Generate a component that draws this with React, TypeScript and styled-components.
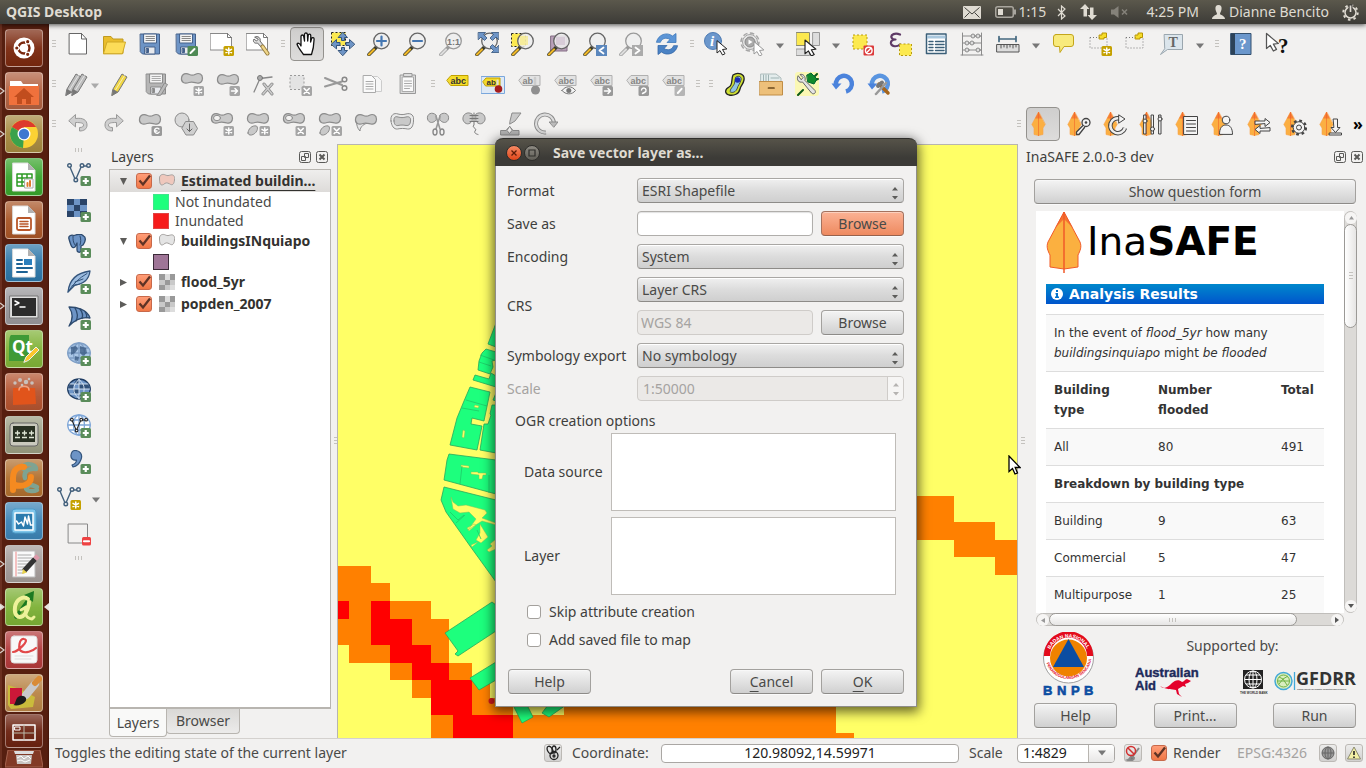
import React from 'react';
import styled, { createGlobalStyle } from 'styled-components';

const ui = '"Noto Sans", "Open Sans", sans-serif';
const line = '#b8b5b0';

const Global = createGlobalStyle`
  * { box-sizing: border-box; }
  body { margin: 0; overflow: hidden; font: 14px/20px ${ui}; color: #4a4a48; background: #f2f1f0; }
  button, input, select, textarea { font: inherit; color: inherit; margin: 0; }
  svg { display: block; flex: none; }
`;

/* ---------- page frame ---------- */
const Desktop = styled.div`
  display: flex; flex-direction: column; height: 100vh; min-height: 768px;
`;
const TopBar = styled.header`
  display: flex; align-items: center; height: 24px; flex: none; padding: 0 7px 0 6px; z-index: 2;
  background: linear-gradient(#5b584c, #3c3b37); color: #dfdbd2; box-shadow: 0 1px 5px rgba(0,0,0,.7);
`;
const AppName = styled.strong` flex: 1; font-weight: 700; font-size: 14px; `;
const Indicator = styled.span<{ $gap: number }>`
  display: flex; align-items: center; gap: 3px; margin-left: ${p => p.$gap}px;
`;
const Below = styled.div` flex: 1; display: flex; min-height: 0; `;
const Main = styled.div` flex: 1; display: flex; flex-direction: column; min-width: 0; `;
const Middle = styled.div` flex: 1; display: flex; min-height: 0; `;

/* ---------- launcher ---------- */
const Launcher = styled.nav`
  width: 49px; flex: none; display: flex; flex-direction: column; gap: 5px; padding-top: 5px; overflow: hidden;
  background: linear-gradient(90deg, #6b3020 0 2px, #561f10 2px 47px, #431408);
`;
const LaunchRow = styled.div<{ $folded?: boolean }>`
  display: grid; grid-template-columns: 5px 38px 6px; align-items: center; flex: none;
  margin-top: ${p => (p.$folded ? -3 : 0)}px;
`;
const Tile = styled.button<{ $bg: string; $short?: boolean }>`
  height: ${p => (p.$short ? 34 : 38)}px; padding: 0; display: grid; place-items: center; border-radius: 4px; overflow: hidden;
  border: 1px solid rgba(255,255,255,.38);
  background: linear-gradient(rgba(255,255,255,.3), rgba(255,255,255,.05) 50%, rgba(0,0,0,.06)), ${p => p.$bg};
`;

/* ---------- toolbars ---------- */
const ToolRow = styled.div` display: flex; gap: 3px; height: 40px; align-items: center; flex: none; `;
const Bar = styled.div<{ $end?: boolean }>`
  display: flex; align-items: center; gap: 2px; margin-left: ${p => (p.$end ? 'auto' : '0')};
`;
const Handle = styled.span`
  width: 10px; height: 9px; flex: none; border: solid #f2f1f0; border-width: 0 3px;
  background: repeating-linear-gradient(#c4c2be 0 1px, transparent 1px 3px);
`;
const SideHandle = styled.span`
  width: 9px; height: 10px; border: solid #f2f1f0; border-width: 3px 0;
  background: repeating-linear-gradient(90deg, #c4c2be 0 1px, transparent 1px 3px);
`;
const ToolButton = styled.button<{ $on?: boolean }>`
  width: 34px; height: 34px; padding: 0; display: grid; place-items: center; border-radius: 4px;
  border: 1px solid ${p => (p.$on ? '#94928e' : 'transparent')};
  background: ${p => (p.$on ? 'linear-gradient(#cfcecd, #dddcdb)' : 'none')};
`;
const Arrow = styled.button<{ $w: number }>`
  width: ${p => p.$w}px; height: 34px; padding: 4px 0 0; border: 0; background: none; display: grid; place-items: center;
`;
const Split = styled.div` display: flex; width: 40px; padding-left: 4px; `;
const Bare = styled.button` border: 0; background: none; padding: 0; height: 34px; display: grid; place-items: center; `;
const More = styled.button` width: 16px; padding: 0; border: 0; background: none; color: #000; font: 700 16px/20px ${ui}; `;
const SideTools = styled.div`
  width: 60px; flex: none; display: flex; flex-direction: column; align-items: center; gap: 2px; padding-top: 1px;
`;
const SideSplit = styled.div` display: flex; width: 60px; padding-left: 3px; `;

/* ---------- docks ---------- */
const DockHead = styled.div`
  display: flex; align-items: center; gap: 4px; height: 25px; flex: none; color: #3f3f3d;
  span { flex: 1; }
`;
const DockBtn = styled.button` border: 0; background: none; padding: 0; width: 13px; height: 13px; `;
const LayersDock = styled.section` width: 222px; flex: none; display: flex; flex-direction: column; `;
const LayersHead = styled(DockHead)` padding: 0 2px; `;
const Tree = styled.ul`
  flex: 1; margin: 0; padding: 0; list-style: none; background: #fff; border: 1px solid ${line}; border-bottom-width: 2px;
`;
const LayerRow = styled.li<{ $sel?: boolean }>`
  display: flex; align-items: center; height: 22px; padding-left: 7px; color: #33322f; font-weight: 700;
  background: ${p => (p.$sel ? 'linear-gradient(#efeeed, #dddbd9)' : 'none')};
  > svg { margin: 0 6px 0 7px; }
  > span:last-child { text-decoration: ${p => (p.$sel ? 'underline' : 'none')}; text-underline-offset: 4px; white-space: nowrap; }
`;
const Expander = styled.button` width: 12px; height: 16px; margin-right: 7px; padding: 0; border: 0; background: none; display: grid; place-items: center; `;
const ClassRow = styled.li` display: flex; align-items: center; gap: 6px; height: 19px; padding-left: 43px; `;
const Swatch = styled.i<{ $c: string; $b: string }>` width: 16px; height: 16px; background: ${p => p.$c}; border: 1px solid ${p => p.$b}; `;
const Tabs = styled.div` display: flex; height: 29px; flex: none; align-items: flex-start; `;
const Tab = styled.button<{ $on?: boolean }>`
  height: ${p => (p.$on ? 28 : 25)}px; width: ${p => (p.$on ? 58 : 74)}px; padding: 0;
  border: 1px solid ${line}; border-top: 0; border-radius: 0 0 4px 4px; margin-left: ${p => (p.$on ? 0 : -1)}px;
  background: ${p => (p.$on ? '#f9f9f8' : 'linear-gradient(#d9d8d6, #ecebea)')};
`;
const Splitter = styled.div<{ $w: number }>` width: ${p => p.$w}px; flex: none; display: grid; place-items: center; `;
const MapView = styled.main` flex: 1; min-width: 0; border: 1px solid ${line}; border-bottom: 0; background: #ffff66; overflow: hidden; `;

/* ---------- shared controls ---------- */
const Push = styled.button<{ $hot?: boolean; $wide?: boolean }>`
  width: ${p => (p.$wide ? '100%' : '83px')}; height: 25px; flex: none; padding: 0; border-radius: 4px; color: #4a4a48;
  border: 1px solid ${p => (p.$hot ? '#a5725e' : '#a3a19e')}; border-bottom-color: ${p => (p.$hot ? '#96624d' : '#8d8b88')};
  background: ${p => (p.$hot ? 'linear-gradient(#fbb294, #ee8a60)' : 'linear-gradient(#f4f4f4, #e2e2e2 50%, #d0d0d0)')};
  box-shadow: inset 0 1px rgba(255,255,255,.4), 0 1px #fafafa;
  u { text-underline-offset: 4px; }
`;
const SelectWrap = styled.span`
  display: grid; align-items: center; height: 25px; min-width: 0;
  > * { grid-area: 1 / 1; }
  > svg { justify-self: end; margin: 4px 4px 0 0; pointer-events: none; }
`;
const Select = styled.select`
  appearance: none; width: 100%; height: 25px; padding: 0 4px; border-radius: 4px; color: #4a4a48;
  border: 1px solid #a9a7a4; border-bottom-color: #8d8b88; background: linear-gradient(#f0f0f0, #dcdcdc 50%, #cfcfcf);
  box-shadow: inset 0 1px #fff;
`;
const Field = styled.input`
  flex: 1; min-width: 0; height: 25px; padding: 0 3px; border: 1px solid #b0aeab; border-radius: 4px; background: #fff;
  box-shadow: inset 0 1px 1px rgba(0,0,0,.12);
  &:disabled { background: #ebe9e7; color: #a5a3a1; border-color: #cfccc9; box-shadow: none; }
`;
const CheckWrap = styled.span<{ $s: number }>`
  display: inline-grid; width: ${p => p.$s}px; height: ${p => p.$s}px; flex: none;
  > * { grid-area: 1 / 1; }
  > svg { pointer-events: none; }
`;
const Box = styled.input`
  appearance: none; width: 100%; height: 100%; border: 1px solid #a3a09c; border-radius: 3px; background: #fff;
  &:checked { border-color: #c8694a; background: linear-gradient(#ff9d78, #f07746); }
`;

/* ---------- InaSAFE dock ---------- */
const SafeDock = styled.section` width: 340px; flex: none; display: flex; flex-direction: column; `;
const SafeHead = styled(DockHead)` padding-right: 2px; `;
const SafeBody = styled.div` flex: 1; min-height: 0; display: flex; flex-direction: column; padding: 10px 10px 10px 8px; `;
const WebGrid = styled.div`
  flex: 1; min-height: 0; margin: 7px -1px 6px 2px; display: grid; grid-template: minmax(0, 1fr) 13px / 1fr 13px;
`;
const Web = styled.article`
  background: #fff; overflow: hidden; padding: 0 20px 0 10px; font: 12px/20px "DejaVu Sans", sans-serif; color: #333;
`;
const Brand = styled.div` display: flex; height: 73px; color: #000; font: 39px/62px "DejaVu Sans", sans-serif; svg { margin-right: 5px; } `;
const Results = styled.h2`
  display: flex; align-items: center; gap: 6px; margin: 0 0 10px; padding-left: 5px; height: 20px;
  color: #fff; font: 700 14px/20px "DejaVu Sans", sans-serif; background: linear-gradient(#0088cc, #0055cc);
`;
const Table = styled.table`
  width: 100%; border-collapse: separate; border-spacing: 0; table-layout: fixed;
  td, th { padding: 8px; border-top: 1px solid #ddd; text-align: left; vertical-align: top; white-space: nowrap; }
  th { white-space: normal; }
  tr:nth-child(odd) > * { background: #f9f9f9; }
`;
const TypeCol = styled.col` width: 104px; `;
const CountCol = styled.col` width: 123px; `;
const VScroll = styled.div`
  display: flex; flex-direction: column; border: 1px solid #c0bebb; border-radius: 7px; background: #dcdad7;
`;
const HScroll = styled.div` display: flex; border: 1px solid #c0bebb; border-radius: 7px; background: #dcdad7; `;
const ScrollEnd = styled.button`
  width: 12px; height: 12px; flex: none; padding: 0; border: 0; border-radius: 6px; background: #f6f5f4; display: grid; place-items: center;
`;
const Thumb = styled.div<{ $v?: boolean }>`
  ${p => (p.$v ? 'height: 104px; margin: 0 -1px;' : 'width: 248px; margin: -1px 0;')}
  flex: none; border: 1px solid #9b9996; border-radius: 7px; display: grid; place-items: center;
  background: linear-gradient(${p => (p.$v ? '90deg,' : '')} #fff, #e6e5e4);
  span { border-color: transparent; background-clip: padding-box; }
`;
const Gap = styled.span` flex: 1; `;
const Logos = styled.div` display: flex; gap: 11px; height: 65px; flex: none; margin-bottom: 6px; padding-left: 9px; `;
const Support = styled.div` flex: 1; display: flex; flex-direction: column; justify-content: space-between; text-align: center; padding-top: 4px; `;
const LogoRow = styled.div` display: flex; padding-left: 30px; align-items: flex-end; gap: 6px; `;
const Buttons = styled.div` display: flex; justify-content: space-between; `;

/* ---------- status bar ---------- */
const Status = styled.footer`
  height: 30px; flex: none; display: flex; align-items: center; padding: 0 3px 1px 6px; border-top: 1px solid #d4d1ce;
`;
const Message = styled.span` flex: 1; white-space: nowrap; `;
const StatusLabel = styled.label<{ $w: number; $dim?: boolean }>`
  width: ${p => p.$w}px; flex: none; white-space: nowrap; color: ${p => (p.$dim ? '#a5a3a1' : 'inherit')};
`;
const Coord = styled.input`
  width: 298px; height: 19px; margin-right: 10px; padding: 0; text-align: center; color: #222;
  border: 1px solid #aaa7a4; border-radius: 4px; background: #fff;
`;
const Combo = styled.span`
  display: flex; width: 98px; height: 19px; margin-right: 9px; border: 1px solid #aaa7a4; border-radius: 4px; background: #fff; overflow: hidden;
  input { width: 71px; border: 0; border-right: 1px solid ${line}; padding: 0 0 0 5px; color: #222; background: none; }
  button { flex: 1; border: 0; padding: 0; display: grid; place-items: center; background: linear-gradient(#fff, #e8e7e6); }
`;
const MiniBtn = styled.button<{ $gap: number }>`
  width: 18px; height: 18px; flex: none; margin-right: ${p => p.$gap}px; padding: 0; display: grid; place-items: center;
  border: 1px solid #bcb9b5; border-radius: 3px; background: linear-gradient(#ececeb, #d2d1d0);
`;
const RenderBox = styled.label` display: flex; align-items: center; gap: 6px; width: 86px; flex: none; `;

/* ---------- dialog window ---------- */
const Dialog = styled.form`
  position: absolute; left: 495px; top: 138px; width: 422px; z-index: 3; background: #f2f1f0; color: #3f3f3d;
  border: 1px solid #8f8d89; border-top: 0; border-radius: 8px 8px 0 0; box-shadow: 0 3px 12px 2px rgba(0,0,0,.6);
`;
const TitleBar = styled.div`
  display: flex; align-items: center; gap: 2px; height: 28px; margin: 0 -1px; padding-left: 11px; border-radius: 8px 8px 0 0;
  background: linear-gradient(#565349, #3c3b37 70%); color: #dfdbd2; border-top: 1px solid #2f2e2b;
  strong { margin-left: 11px; }
`;
const WinBtn = styled.button<{ $close?: boolean }>`
  width: 16px; height: 16px; padding: 0; border-radius: 8px; border: 1px solid #2f2e2b; display: grid; place-items: center;
  background: ${p => (p.$close ? 'linear-gradient(#f58a64, #e0461a)' : 'linear-gradient(#8d8a82, #605e57)')};
`;
const Form = styled.div`
  display: grid; grid-template-columns: 122px minmax(0, 1fr); column-gap: 8px; row-gap: 8px; padding: 12px 12px 10px 11px; align-items: center;
`;
const Label = styled.label<{ $off?: boolean; $tall?: boolean }>`
  white-space: nowrap; color: ${p => (p.$off ? '#a5a3a1' : 'inherit')}; grid-row: ${p => (p.$tall ? 'span 2' : 'auto')};
`;
const Pair = styled.div` display: flex; gap: 8px; min-width: 0; `;
const Spin = styled.span`
  display: flex; height: 25px; border: 1px solid #cfccc9; border-radius: 4px; background: #ebe9e7; overflow: hidden;
  input { flex: 1; min-width: 0; border: 0; background: none; padding: 0 5px; color: #a5a3a1; }
  span { width: 16px; border-left: 1px solid #cfccc9; background: #f6f5f4; display: grid; place-items: center; }
`;
const Group = styled.fieldset`
  border: 0; margin: 0; padding: 0 20px 0 28px; min-width: 0;
  legend { padding: 0; margin-left: -9px; height: 22px; }
`;
const Options = styled.div` display: grid; grid-template-columns: 81px minmax(0, 1fr); column-gap: 6px; row-gap: 6px; align-items: center; `;
const OptionArea = styled.textarea` width: 100%; height: 78px; display: block; resize: none; border: 1px solid #bfbcb8; background: #fff; `;
const Check = styled.label` display: flex; align-items: center; gap: 8px; height: 28px; padding-left: 31px; `;
const Checks = styled.div` padding: 3px 0 15px; `;
const Actions = styled.div` display: flex; gap: 8px; padding: 0 12px 12px; button:first-child { margin-right: auto; } `;
const Pointer = styled.div` position: absolute; left: 1008px; top: 455px; z-index: 4; `;

/* ---------- icon pieces ---------- */
type Kids = { children?: React.ReactNode };
const I = ({ children, s = 24 }: Kids & { s?: number }) => (
  <svg width={s} height={s} viewBox="0 0 24 24" fill="none" strokeLinecap="round" strokeLinejoin="round">{children}</svg>
);
const G = '#8b8b8b';
const Sheet = ({ c = '#666' }) => <g><path d="M3.500 1.500h12l5 5.500v15h-17z" fill="#fff" stroke={c} /><path d="M15.500 1.500v5.500h5" stroke={c} /></g>;
const Badge = ({ c, children }: Kids & { c: string }) => <g><rect x="13.500" y="14" width="10.500" height="10" rx="1.500" fill={c} />{children}</g>;
const Plus = () => <Badge c="#5a8c5a"><path d="M18.750 16v6M15.750 19h6" stroke="#fff" strokeWidth="2.200" strokeLinecap="butt" /></Badge>;
const Star = ({ c = '#c5a100' }) => <Badge c={c}><path d="M18.750 16v6M16 17.400l5.500 3.200M21.500 17.400L16 20.600" stroke="#fff" strokeWidth="1.500" /></Badge>;
const Cross = () => <Badge c="#a5a5a5"><path d="M16.200 16.500l5 5M21.200 16.500l-5 5" stroke="#fff" strokeWidth="1.700" /></Badge>;
const Blob = ({ fill = '#c9c9c9', stroke = G }) => (
  <path d="M1.500 6C2 1.500 6 .700 9.500 2.500c2.500 1.200 4 .800 6-.300 3.500-1.700 7 0 7 4 0 3.500-2.500 5.500-5.500 4.800-3-.600-5-1.500-8-.500C4.500 12 1 10.500 1.500 6z" fill={fill} stroke={stroke} strokeWidth="1.200" />
);
const Blob2 = () => <path d="M2 21c0-4 4-8 8.500-7 2.500 2 0 8-5 9-2 .300-3.500-.500-3.500-2z" fill="#c9c9c9" stroke={G} />;
const Ring = ({ children }: Kids) => <I><Blob /><ellipse cx="7" cy="6" rx="3.500" ry="2.700" fill="#f2f1f0" stroke={G} />{children}</I>;
const Lens = ({ dim, children, under }: Kids & { dim?: boolean; under?: React.ReactNode }) => (
  <I>
    {under}
    <path d="M2 22.500l7-7" stroke={dim ? '#999' : '#3a3a2a'} strokeWidth="3.600" />
    <path d="M2 22.500l5-5" stroke={dim ? '#ddd' : '#f0b828'} strokeWidth="2.200" />
    <circle cx="14.500" cy="9" r="7.800" fill="#eee" fillOpacity=".85" stroke={dim ? '#9a9a9a' : '#666'} strokeWidth="1.300" />
    {children}
  </I>
);
const Tag = ({ on, t = 'abc', children }: Kids & { on?: boolean; t?: string }) => (
  <I>
    <path d="M2 8L6 3.500h17v10H6z" fill={on ? '#f5dc28' : '#e2e2e2'} stroke={on ? '#c0a000' : '#b0b0b0'} />
    <text x="5.500" y="11.500" fontFamily="Liberation Sans, sans-serif" fontWeight="700" fontSize="9" fill={on ? '#333' : '#858585'}>{t}</text>
    {children}
  </I>
);
const Vee = ({ c = '#43607c' }) => <g stroke={c} strokeWidth="1.400"><path d="M2.500 4l6 14L14.500 4H20" /><g fill="#f2f1f0"><circle cx="2.500" cy="3.500" r="1.800" /><circle cx="8.800" cy="18" r="1.800" /><circle cx="15" cy="3.500" r="1.800" /><circle cx="21.500" cy="3.500" r="1.800" /></g></g>;
const Globe = ({ fill, c }: { fill: string; c: string }) => <g stroke={c} strokeWidth="1.300"><ellipse cx="12" cy="11" rx="11.300" ry="10" fill={fill} /><ellipse cx="12" cy="11" rx="5.500" ry="10" /><path d="M12 1v20M1 11h22M3 6h18M3 16h18" /></g>;
const Floppy = ({ dim }: { dim?: boolean }) => <g stroke={dim ? G : '#44608a'}><path d="M2.500 2h19v20h-17l-2-2z" fill={dim ? '#b5b5b5' : '#6d94c6'} /><path d="M6 2h12.500v9H6z" fill="#f4f4f4" /><path d="M8 4.500h8.500M8 6.500h8.500M8 8.500h8.500" stroke={dim ? '#aaa' : '#888'} /><path d="M7 15h10v7H7z" fill="#e8eaee" /><path d="M8.500 16.500h2v4h-2z" fill={dim ? '#888' : '#44608a'} /></g>;
const Pencil = ({ c, x = 0 }: { c: string; x?: number }) => <g transform={`translate(${x} 0)`}><path d="M5 17L14 2l5 3-9 15-6 3.500z" fill={c} stroke="#777" /><path d="M7.500 18L16.500 3.500" stroke="#fff" strokeOpacity=".6" /><path d="M5 17l5 3-6 3.500z" fill="#777" /></g>;
const Mouse = ({ x = 12, y = 10, c = '#222', k = 1 }) => <path transform={`translate(${x} ${y}) scale(${k})`} d="M0 0v12l3-2.500 2.500 4.500 2.500-1.300-2.500-4.200 4-.500z" fill="#fff" stroke={c} />;
const Leaf = ({ children }: Kids) => (
  <I><path d="M7.500 0L.800 12.500 3 16v6.500l4.500 1 4.500-1V16l2.200-3.500z" fill="#fbaf42" stroke="#f9a24a" strokeWidth=".6" /><path d="M7.500 0v24" stroke="#f58233" strokeWidth="1" /><path d="M4 6.500L7.500 0 11 6.500z" fill="#f1592a" opacity=".55" />{children}</I>
);
const Tri = ({ c = '#777' }) => <svg width="8" height="6" viewBox="0 0 8 6"><path d="M0 .5h8L4 5.500z" fill={c} /></svg>;
const UpDown = ({ c = '#5c5c5a' }) => <svg width="10" height="14" viewBox="0 0 10 14"><path d="M2 4.500h6L5 1zM2 10h6l-3 3.500z" fill={c} /></svg>;
const Note = () => <path d="M11.500 3h2.500V1h4.500v4.500H16V7h-4.500z" fill="#f5dc28" stroke="#b89400" />;

/* ---------- toolbar data ---------- */
type Tool = [string, React.ReactNode, ('on' | 'menu')?];
const fileTools: Tool[] = [
  ['New', <I><Sheet /></I>],
  ['Open', <I><path d="M1.500 21V4.500H9L11 7h10v14z" fill="#e9bd2c" stroke="#c09a20" /><path d="M1.500 21.500L5 10h18.500l-3 11.500z" fill="#fcdc58" stroke="#cfa827" /></I>],
  ['Save', <I><Floppy /></I>],
  ['Save as', <I><Floppy /><Badge c="#4f8a55"><path d="M16.500 21l4-4" stroke="#fff" strokeWidth="2" /></Badge></I>],
  ['New composer', <I><path d="M.500 1.500h17l4 4v12.500H.500z" fill="#fff" stroke="#888" /><path d="M17.500 1.500v4h4" stroke="#777" /><Star /></I>],
  ['Composer manager', <I><path d="M.500 1.500h17l4 4v12.500H.500z" fill="#fff" stroke="#888" /><path d="M17.500 1.500v4h4" stroke="#777" /><path d="M9 5c3-1.500 6 1 5 4l4 5-2 2-4.500-5C8 12 6.500 9 8 7l2.500 2 1.500-1.500z" fill="#ddd" stroke="#666" /><path d="M16.500 14.500l5 7" stroke="#93793a" strokeWidth="4" /><path d="M16.500 14.500l5 7" stroke="#f0d68a" strokeWidth="2.200" /></I>],
];
const navTools: Tool[] = [
  ['Pan', <I><path d="M8.500 22.500C6 19 3 15.500 2 12c1-1.500 3-.500 4 2V4.500c0-2 2.500-2 2.700 0L9.500 9V2.500c0-2 2.800-2 2.900 0L12.700 9l.500-5.500c.200-1.800 2.600-1.700 2.600.200L15.600 10l1-3.500c.600-1.600 2.700-1 2.500.700-.200 6-.900 10.500-2.600 15.300z" fill="#fff" stroke="#111" strokeWidth="1.300" /></I>, 'on'],
  ['Pan to selection', <I><path d="M.500.500h14v13H.500z" fill="#fce94f" stroke="#222" strokeDasharray="2 2" strokeLinecap="butt" /><path d="M12 .500l4.500 5h-3v3h-3v-3h-3zM12 23.500l4.500-5h-3v-3h-3v3h-3zM.500 12l5-4.500v3h3.500v3H5.500v3zM23.500 12l-5-4.500v3H15v3h3.500v3z" fill="#6d94c6" stroke="#33547c" /></I>],
  ['Zoom in', <Lens><path d="M14.500 4.500v9M10 9h9" stroke="#4577b2" strokeWidth="2.200" /></Lens>],
  ['Zoom out', <Lens><path d="M10 9h9" stroke="#4577b2" strokeWidth="2.200" /></Lens>],
  ['Zoom native', <Lens dim><text x="8" y="12.500" fontFamily="Liberation Sans, sans-serif" fontWeight="700" fontSize="9" fill="#777">1:1</text></Lens>],
  ['Zoom full', <Lens><path d="M3.500.500h7l-2 2 3.500 3.500-2.500 2.500L6 5 3.500 7.500zM23.500.500h-7l2 2-3.500 3.500 2.500 2.500L21 5l2.500 2.500zM23.500 20.500h-7l2-2-3.500-3.500 2.500-2.500L21 16l2.500-2.500z" fill="#6d94c6" stroke="#33547c" strokeWidth=".8" /></Lens>],
  ['Zoom to selection', <Lens under={<path d="M.500 1.500h14v13H.500z" fill="#fce94f" stroke="#222" strokeDasharray="2 2" strokeLinecap="butt" />}><path d="M9 4h8v9H9z" fill="#fce94f" opacity=".45" /></Lens>],
  ['Zoom to layer', <Lens under={<path d="M4 4h16v15H4z" fill="#b9a0b9" stroke="#836c83" />}><path d="M9 5h9v8H9z" fill="#c9b6c9" opacity=".5" /></Lens>],
  ['Zoom last', <Lens><rect x="13" y="13" width="11" height="11" fill="#5b87bd" /><path d="M20.500 15.500l-4 3 4 3" stroke="#fff" strokeWidth="1.800" /></Lens>],
  ['Zoom next', <Lens dim><rect x="13" y="13" width="11" height="11" fill="#ababab" /><path d="M16.500 15.500l4 3-4 3" stroke="#fff" strokeWidth="1.800" /></Lens>],
  ['Refresh', <I><path d="M1.500 10C3 2.500 12-.500 17.500 4L21 1.500v9h-9l3-3C11 5 6.500 6.500 5.500 10z" fill="#5c95d6" stroke="#3e78bb" strokeWidth=".8" /><path d="M22.500 14C21 21.500 12 24.500 6.500 20L3 22.500v-9h9l-3 3c4 2.500 8.500 1 9.500-2.500z" fill="#4a82c4" stroke="#3568a8" strokeWidth=".8" /></I>],
];
const attrTools: Tool[] = [
  ['Identify', <I><circle cx="9" cy="9" r="8.500" fill="#6b97cc" stroke="#4f7cb3" /><text x="6" y="14" fontFamily="Liberation Serif, serif" fontStyle="italic" fontWeight="700" fontSize="15" fill="#fff">i</text><Mouse x={13} y={9} /></I>],
  ['Run action', <I><g strokeLinecap="butt"><circle cx="10" cy="10" r="9" stroke="#a5a5a5" strokeWidth="1.500" strokeDasharray="4.500 2.500" /><circle cx="10" cy="10" r="7.500" fill="#e5e5e5" stroke="#a5a5a5" /></g><circle cx="10" cy="10" r="5" fill="#aaa" stroke="#888" /><path d="M8.500 7.500v5l4-2.500z" fill="#fff" /><Mouse x={14} y={10} c="#999" /></I>, 'menu'],
  ['Select', <I><path d="M.500.500h13v13H.500z" fill="#fce94f" stroke="#8a8a70" /><path d="M17 .500h6.500v13H17zM.500 17h13v6.500H.500z" fill="#ddd" stroke="#999" /><Mouse x={9} y={8} k={1.15} /></I>, 'menu'],
  ['Deselect', <I><path d="M1 3h14v14H1z" fill="#fce94f" stroke="#b99c10" strokeDasharray="2 2" strokeLinecap="butt" /><rect x="11.500" y="13.500" width="10.500" height="10" rx="1" fill="#dc3a3a" /><circle cx="16.750" cy="18.500" r="3.300" stroke="#fff" strokeWidth="1.400" /><path d="M14.500 20.700l4.500-4.400" stroke="#fff" strokeWidth="1.400" /></I>],
  ['Select by expression', <I><path d="M12 2.500C7 .500 2.500 2.500 3.500 5.500c.500 1.500 2 2 4 2-3 .200-5 1.500-4.500 4 .800 3.500 6 3.500 9 1" stroke="#5e3a66" strokeWidth="2.200" /><path d="M11.500 12h12v11.500h-12z" fill="#fce94f" stroke="#b99c10" strokeDasharray="2 2" strokeLinecap="butt" /></I>],
  ['Attribute table', <I><path d="M2.500 2h19.500v19.500H2.500z" fill="#fff" stroke="#3b5f78" strokeWidth="1.500" /><path d="M3 3.500h18.500v3H3z" fill="#a9c7dd" /><path d="M5 9.500h4M5 12.500h4M5 15.500h4M5 18.500h4M11.500 9.500H20M11.500 12.500H20M11.500 15.500H20M11.500 18.500H20" stroke="#3b5f78" strokeWidth="1.400" /></I>],
  ['Field calculator', <I><path d="M2.500 1v22M21.500 1v22M1 23h22M2.500 4h19M2.500 11h19M2.500 18h19" stroke="#8c8c8c" /><g fill="#ddd" stroke="#8c8c8c"><circle cx="13" cy="4" r="2" /><circle cx="18" cy="4" r="2" /><circle cx="7" cy="11" r="2" /><circle cx="12" cy="11" r="2" /><circle cx="7" cy="18" r="2" /><circle cx="18" cy="18" r="2" /></g></I>],
  ['Measure', <I><path d="M3 7h17M3 4.500v5M20 4.500v5" stroke="#44687f" strokeWidth="1.700" /><path d="M1 12.500h22v7.500H1z" fill="#ddd" stroke="#555" /><path d="M5 13v3M8 13v2M11 13v3M14 13v2M17 13v3M20 13v2" stroke="#555" /></I>, 'menu'],
  ['Map tips', <I><path d="M4 2.500h15q2.500 0 2.500 2.500v7q0 2.500-2.500 2.500h-7L8 20.500l-.500-6H4Q1.500 14.500 1.500 12V5Q1.500 2.500 4 2.500z" fill="#f8ea7c" stroke="#c3a51a" /></I>],
  ['New bookmark', <I><path d="M2 5.500h17v10.500H2z" stroke="#777" strokeDasharray="1 2" strokeLinecap="butt" /><Note /><Star /></I>],
  ['Show bookmarks', <I><path d="M2 5.500h17v10.500H2z" stroke="#777" strokeDasharray="1 2" strokeLinecap="butt" /><Note /></I>],
  ['Text annotation', <I><path d="M4.500 2.500h18v15H7.500L.500 22.500l4-5.500z" fill="#dbe5ec" stroke="#9aa6ae" /><text x="8.500" y="14.500" fontFamily="Liberation Serif, serif" fontWeight="700" fontSize="14" fill="#666">T</text></I>, 'menu'],
];
const helpTools: Tool[] = [
  ['Help contents', <I><path d="M2 1.500h20v21H2z" fill="#6b97cc" stroke="#34516f" /><path d="M2 1.500h4v21H2z" fill="#2c4258" /><text x="10" y="17" fontFamily="Liberation Serif, serif" fontWeight="700" fontSize="15" fill="#fff">?</text></I>],
  ["What's this", <I><Mouse x={1.500} y={1.500} c="#555" k={1.250} /><text x="13" y="21" fontFamily="Liberation Serif, serif" fontWeight="700" fontSize="21" fill="#111">?</text></I>],
];
const editTools: Tool[] = [
  ['Toggle editing', <I><Pencil c="#f0d644" /></I>],
  ['Save edits', <I><Floppy dim /><path d="M14 22l6.500-11 3 1.500L17 23l-4 1z" fill="#bbb" stroke={G} /></I>],
  ['Add feature', <I><Blob /><Star c="#a5a5a5" /></I>],
  ['Move feature', <I><g transform="translate(0 1)"><Blob /></g><Badge c="#a5a5a5"><path d="M15.500 19h6M19 16.500l2.500 2.500-2.500 2.500" stroke="#fff" strokeWidth="1.500" /></Badge></I>],
  ['Node tool', <I><path d="M2 20L8 6.500 20 5" stroke="#888" strokeWidth="1.300" /><circle cx="8" cy="6" r="2.500" fill="#aaa" stroke="#777" /><path d="M12 12l8 10M20 12L11 22" stroke="#888" strokeWidth="3" /><path d="M12 12l8 10M20 12L11 22" stroke="#ccc" strokeWidth="1.500" /></I>],
  ['Delete selected', <I><path d="M2 3.500h14v14H2z" fill="#e3e3e3" stroke="#999" strokeDasharray="2 2" strokeLinecap="butt" /><Cross /></I>],
  ['Cut', <I><path d="M1 6l17 7M1 14.500l17-5" stroke="#999" strokeWidth="2" /><circle cx="20.500" cy="7.500" r="2.300" stroke="#888" strokeWidth="1.500" /><circle cx="20.500" cy="16" r="2.300" stroke="#888" strokeWidth="1.500" /></I>],
  ['Copy', <I><path d="M9.500 4.500h8l4 4v11h-12z" fill="#f6f6f6" stroke="#ccc" /><path d="M3.500 3.500h8l4 4v13h-12z" fill="#fafafa" stroke="#aaa" /><path d="M6 9.500h7M6 12h7M6 14.500h7M6 17h7" stroke="#aaa" /></I>],
  ['Paste', <I><path d="M4.500 3h15v18.500h-15z" fill="#ddd" stroke="#999" /><path d="M6.500 5h11v14.500h-11z" fill="#fafafa" stroke="#aaa" /><path d="M8 1.500h8v3H8z" fill="#ddd" stroke="#999" /><path d="M8.500 9h7M8.500 11.500h7M8.500 14h7M8.500 16.500h5" stroke="#aaa" /></I>],
];
const labelTools: Tool[] = [
  ['Labeling', <Tag on />],
  ['Pin labels', <I><path d="M.500 4.500h23v17H.500z" fill="#dfe9f5" stroke="#7aa7dc" /><path d="M2 9.500L5 6h14v8H5z" fill="#f5dc28" stroke="#c0a000" /><text x="5.500" y="12.500" fontFamily="Liberation Sans, sans-serif" fontWeight="700" fontSize="8" fill="#333">ab</text><path d="M16.500 8.500v7" stroke="#ddd" strokeWidth="2" /><circle cx="17.500" cy="17" r="3.800" fill="#a51d1d" /></I>],
  ['Highlight pinned', <Tag t="ab"><path d="M18 6v8" stroke="#ccc" strokeWidth="2.500" /><circle cx="18.500" cy="18" r="4.500" fill="#8f8f8f" /></Tag>],
  ['Show labels', <Tag><path d="M9 18.500c3.500-5 10-5 13.500 0-3.500 4.500-10 4.500-13.500 0z" fill="#f4f4f4" stroke="#777" /><circle cx="15.800" cy="18.500" r="2.500" fill="#777" /></Tag>],
  ['Move label', <Tag><Badge c="#999"><path d="M15.500 19h6M19 16.500l2.500 2.500-2.500 2.500" stroke="#fff" strokeWidth="1.500" /></Badge></Tag>],
  ['Rotate label', <Tag><Badge c="#999"><path d="M16.500 18a2.300 2.300 0 1 1 3 2.500l-2 1" stroke="#fff" strokeWidth="1.400" /></Badge></Tag>],
  ['Change label', <Tag><Badge c="#b5b5b5"><path d="M16.800 21l3.800-4.200" stroke="#fff" strokeWidth="2" /></Badge></Tag>],
];
const pluginTools: Tool[] = [
  ['Contour', <I><path d="M10 3C15-.500 22 2 21 8c-1 5-3 5-4 9-1 5-6 7-11 6-5-1.500-4-6 0-8 4-1.500 2-8 4-12z" fill="#cfe032" stroke="#222" strokeWidth="1.300" /><path d="M13 5c3-2 6 0 5 3-1 4-3 5-4 9-2 4-6 4-7 2.500C7 16 12 14 12 9z" fill="#8fc4e4" stroke="#333" strokeWidth=".8" /><circle cx="14.500" cy="8" r="2.800" fill="#1c2bb0" /></I>],
  ['Archive', <I><path d="M2 2h15l5 4v7H2z" fill="#e3ecec" stroke="#aebcbc" /><path d="M4.500 3v7M7 3v7M9.500 3v7M12 6h8" stroke="#9fb3b3" /><path d="M.500 9.500h23v13.500H.500z" fill="#edc07a" stroke="#c08d45" /><path d="M9.500 16h5.500" stroke="#6b4a1c" strokeWidth="1.700" /></I>],
  ['Plugins', <I><rect width="24" height="24" rx="3" fill="#fbf8b4" /><path d="M3 23l5-5M19 5l3-3M20 8l3-1" stroke="#0c5a18" strokeWidth="2" /><path d="M12 3l4-2 6 6-3 5-6-2z" fill="#108a2a" stroke="#063" /><path d="M3 4C1 8 4 11 7.500 10l9 11c2 2 5 0 3.500-2.500L10 8.500C11 4.500 8 1.500 5 2.500L8 5.500 6.500 7.500z" fill="#e3e3e3" stroke="#666" /></I>],
  ['Reload', <I><path d="M5 13a8 8 0 1 1 10 6.500" stroke="#4b83dc" strokeWidth="4.500" strokeLinecap="butt" /><path d="M.500 11.500h10L5 17.500z" fill="#4b83dc" /></I>],
  ['Configure reload', <I><path d="M5 13a8 8 0 1 1 10 6.500" stroke="#5a95e0" strokeWidth="4.500" strokeLinecap="butt" /><path d="M.500 11.500h10L5 17.500z" fill="#4b83dc" /><path d="M12 12l9 9" stroke="#a5651c" strokeWidth="3.500" /><path d="M19 11L9 22" stroke="#999" strokeWidth="2.500" /><path d="M11 14l4-3.500" stroke="#777" strokeWidth="4" /></I>],
];
const advTools: Tool[] = [
  ['Undo', <I><path d="M3 8.500l6.500-6v4C17 5.500 21 8 21 13c0 4-3 6-7.500 6v-3.500c3 0 4-1 4-2.500 0-2-2.500-2.500-8-2.500v4z" fill="#cfcfcf" stroke="#999" /></I>],
  ['Redo', <I><path d="M21 8.500l-6.500-6v4C7 5.500 3 8 3 13c0 4 3 6 7.500 6v-3.500c-3 0-4-1-4-2.500 0-2 2.500-2.500 8-2.500v4z" fill="#cfcfcf" stroke="#999" /></I>],
  ['Rotate feature', <I><g transform="translate(0 1)"><Blob /></g><Badge c="#999"><path d="M21 17a2.600 2.600 0 1 0 .3 3M17 19h2" stroke="#fff" strokeWidth="1.300" /></Badge></I>],
  ['Simplify', <I><circle cx="8" cy="8" r="7" fill="#d8d8d8" stroke={G} /><path d="M12 9.500h7.500l4 7-4 6.500H12l-4-6.500z" fill="#cfcfcf" stroke={G} /><path d="M15.500 12v7M13 17l2.500 2.500L18 17" stroke="#666" /></I>],
  ['Add ring', <Ring><Star c="#a5a5a5" /></Ring>],
  ['Add part', <I><Blob /><Blob2 /><Star c="#a5a5a5" /></I>],
  ['Delete ring', <Ring><Cross /></Ring>],
  ['Delete part', <I><Blob /><Blob2 /><Cross /></I>],
  ['Reshape', <I><path d="M2 9c1 4 1 7 4 10 0-4 4-8 9-8" fill="#e6e6e6" stroke={G} /><g transform="translate(0 1)"><Blob /></g></I>],
  ['Offset curve', <I><path d="M1 9C0 3 4 .500 8 2c3 .800 5 .800 8 0 5-1.500 8.500 1.500 7.500 7-.300 5-2 8.500-6 8-3-.700-7-.700-10 0C4 17.500 1.500 14 1 9z" fill="#eaeaea" stroke={G} /><path d="M4 9c-.500-3.500 1-5 4-4 3 .800 5 .800 8 0 3.500-1 5 1 4.500 4 0 3-1.500 5-4.500 4.500-3-.600-5-.600-8 0C5.500 14 4 12 4 9z" fill="#c9c9c9" stroke={G} /></I>],
  ['Split features', <I><path d="M10 3C6-1 .500 2 1.500 7 3 12 8 11 10 8zM14 3c4-4 9.500-1 8.500 4-1.500 5-6.500 4-8.500 1z" fill="#c9c9c9" stroke={G} /><path d="M10 4l4 13M14 4l-4 13" stroke="#999" strokeWidth="1.600" /><ellipse cx="9" cy="20" rx="2" ry="3" stroke="#888" strokeWidth="1.400" /><ellipse cx="16" cy="20" rx="2" ry="3" stroke="#888" strokeWidth="1.400" /></I>],
  ['Merge features', <I><path d="M10 2C6-1 0 2 1 8c2 5 7 5 9 1zM14 2c4-3 10 0 9 6-2 5-7 5-9 1z" fill="#c9c9c9" stroke={G} /><path d="M8 3.500h8M8 6.500h8M8 9.500h8M12 1v12c-3 3 4 3 1 6-1 2 1 3 3 3.500" stroke="#777" /></I>],
  ['Rotate symbols', <I><path d="M12 9L14 1h9l-6 8-5 3z" fill="#c9c9c9" stroke={G} /><path d="M3 18.500h5l3.500-4 3.500 4h6V23H3z" fill="#b5b5b5" stroke={G} /><path d="M11.500 14.500l-2.500 4 2.500 3 2.500-3z" fill="#f2f1f0" stroke={G} /></I>],
  ['Redo rotate', <I><path d="M12 20.500A9 9 0 1 1 20 11" stroke={G} strokeWidth="4" strokeLinecap="butt" /><path d="M12 20.500A9 9 0 1 1 20 11" stroke="#dcdcdc" strokeWidth="2.200" strokeLinecap="butt" /><path d="M15.500 10h8.500l-4 5z" fill="#bbb" stroke={G} /></I>],
];
const o = { fill: '#f4f4f4', stroke: '#444' };
const safeTools: Tool[] = [
  ['Toggle dock', <Leaf />, 'on'],
  ['Keywords', <Leaf><circle cx="19" cy="10.500" r="4" {...o} strokeWidth="1.300" /><path d="M16 13.500L9.500 20v2.500H12l5.500-7" {...o} strokeWidth="1.300" /><circle cx="19" cy="10.500" r="1.300" fill="#444" /></Leaf>],
  ['Reset', <Leaf><path d="M22 16a7.500 7.500 0 1 1-5-9.500" stroke="#444" strokeWidth="4.500" strokeLinecap="butt" /><path d="M22 16a7.500 7.500 0 1 1-5-9.500" stroke="#eee" strokeWidth="2.500" strokeLinecap="butt" /><path d="M16 3l6 4-6 4z" {...o} /></Leaf>],
  ['Options', <Leaf><g {...o}><path d="M5 3h2v19H5zM12.500 3h2v19h-2zM20 3h2v19h-2z" /><circle cx="6" cy="9" r="2" /><circle cx="13.500" cy="17" r="2" /><circle cx="21" cy="7" r="2" /></g></Leaf>],
  ['Impact functions', <Leaf><path d="M9 4.500h13.500v18H9z" {...o} /><path d="M11.500 8.500h9M11.500 12h9M11.500 15.500h9M11.500 19h9" stroke="#444" /></Leaf>],
  ['Minimum needs', <Leaf><circle cx="15" cy="8" r="3.800" {...o} /><path d="M8.500 22c0-6 2.500-9 6.500-9s6.500 3 6.500 9z" {...o} /></Leaf>],
  ['Converter', <Leaf><path d="M8 12V9h10V6.500l5 4-5 4V12z" {...o} /><path d="M23 16v3H13v2.500l-5-4 5-4V16z" {...o} /></Leaf>],
  ['Batch', <Leaf><circle cx="16" cy="15.500" r="6.800" stroke="#444" strokeWidth="2.600" strokeDasharray="2.700 2.640" strokeLinecap="butt" /><circle cx="16" cy="15.500" r="5.800" {...o} /><circle cx="16" cy="15.500" r="2.500" stroke="#444" /></Leaf>],
  ['Save scenario', <Leaf><path d="M14.500 7h4v8.500h2.500l-4.500 5-4.500-5h2.500z" {...o} /><path d="M10.500 21h12v2h-12z" {...o} /></Leaf>],
];
const sideTools: Tool[] = [
  ['Add vector layer', <I><Vee /><Plus /></I>],
  ['Add raster layer', <I><path d="M0 1h20v18H0z" fill="#6d94c6" /><path d="M0 1h7v6H0zM13 1h7v6h-7zM7 7h6v6H7zM0 13h7v6H0zM13 13h7v6h-7z" fill="#2a4468" /><Plus /></I>],
  ['Add PostGIS layer', <I><path d="M2 5C1 2 4 .500 7 1.500 11 0 15 0 16.500 2 19 3 19 7 16 11l-2 1v5c-1 2-4 1.500-4-1V9l-2 4c-3 2-4-1-6-8z" fill="#6d94c6" stroke="#2d4a6e" strokeWidth="1.300" /><path d="M6 2c0 4 0 6 2 9M13 2c1 3 1 6 0 9" stroke="#2d4a6e" /><Plus /></I>],
  ['Add SpatiaLite layer', <I><path d="M1 22C2 12 8 3 23 1c-1 8-6 13-15 14z" fill="#9cbce0" stroke="#33547c" strokeWidth="1.300" /><path d="M1 22C6 14 12 8 20 3.500M8 12l8-3M5 16l8-2" stroke="#33547c" /><Plus /></I>],
  ['Add MSSQL layer', <I><path d="M2 1c7 0 18 2 21 11-6-1-14 1-21 8 4-6 4-13 0-19z" fill="#6d94c6" stroke="#2d4a6e" strokeWidth="1.300" /><path d="M8 2c3 5 3 9 1 13M13 3c3 4 3 7 2 9.500M18 5.500c2 3 2 4 1.500 6" stroke="#2d4a6e" strokeWidth="1.300" /><Plus /></I>],
  ['Add WMS layer', <I><Globe fill="#a9c6e6" c="#7f9fc6" /><path d="M4 5l5-1 2 3-3 4-4 2zM13 4l6 2 1 5-4 3-3-3zM8 14l4 1-1 4-3-1z" fill="#33547c" opacity=".7" /><Plus /></I>],
  ['Add WCS layer', <I><ellipse cx="12" cy="11" rx="11.300" ry="10" fill="#6d94c6" stroke="#1f3c62" strokeWidth="1.300" /><path d="M7 6h5V1.500C9 2 8 3 7 6zM12 6v5h5.500c0-2 0-3-.500-5zM6.500 11h5.500v5H7c-.500-2-.500-3-.500-5zM1 11h5.500c0-2 0-3 .500-5H3zM17.500 11H23l-2-5h-4zM12 16h5l-2 4-3 .500z" fill="#1f3c62" opacity=".75" /><path d="M1.500 11h21M12 1.500v19M3 6h18M3 16h18M12 1.500c-7 5-7 14 0 19M12 1.500c7 5 7 14 0 19" stroke="#dbe8f5" strokeWidth=".9" /><Plus /></I>],
  ['Add WFS layer', <I><Globe fill="#fff" c="#7ea6d8" /><g transform="translate(3 3) scale(.75)"><Vee c="#222" /></g><Plus /></I>],
  ['Add delimited text', <I><path d="M8 .500c5 0 8 4 6 9-1.500 4-5 7-8 7.500l-1-2c3-1 4.500-3 4.500-5C6 11 3.500 8 4 5S6 .500 8 .500z" fill="#6d94c6" stroke="#33547c" strokeWidth="1.200" /><Plus /></I>],
];

const Tools = ({ items }: { items: Tool[] }) => (
  <>
    {items.map(([name, icon, mode]) => (
      <React.Fragment key={name}>
        <ToolButton type="button" aria-label={name} $on={mode === 'on'}>{icon}</ToolButton>
        {mode === 'menu' && <Arrow type="button" aria-label={`${name} menu`} $w={18}><Tri /></Arrow>}
      </React.Fragment>
    ))}
  </>
);

/* ---------- launcher data ---------- */
const D = ({ children }: Kids) => <svg width="36" height="36" viewBox="0 0 36 36" fill="none" strokeLinecap="round" strokeLinejoin="round">{children}</svg>;
const Doc = ({ children }: Kids) => <D><path d="M7 4h15l7 7v21H7z" fill="#fff" stroke="#ddd" /><path d="M22 4l7 7h-7z" fill="rgba(0,0,0,.3)" />{children}</D>;
const apps: [string, string, React.ReactNode, ('run' | 'active')?][] = [
  ['Dash', '#7a280e', <D><circle cx="18" cy="18" r="10.500" fill="#fff" /><circle cx="18" cy="18" r="5.500" stroke="#7a280e" strokeWidth="2.400" /><path d="M18 18l-9 0M18 18l4.500-8M18 18l4.500 8" stroke="#fff" strokeWidth="1.500" /><circle cx="18" cy="18" r="4" fill="#fff" /><g fill="#7a280e" stroke="#fff" strokeWidth="1.200"><circle cx="10.800" cy="18" r="2.200" /><circle cx="21.700" cy="11.700" r="2.200" /><circle cx="21.700" cy="24.300" r="2.200" /></g></D>],
  ['Files', '#b06040', <D><path d="M4 8h11l2 3h15v21H4z" fill="#fff" /><path d="M3 13h30v19H3z" fill="#f0713c" /><path d="M18 15L8 24h3v7h5v-5h4v5h5v-7h3z" fill="#c14d1e" /></D>, 'run'],
  ['Chrome', '#a5893f', <D><circle cx="18" cy="18" r="14" fill="#fbd234" /><path d="M18 18L5.900 11A14 14 0 0 1 30.100 11H18z" fill="#dd3a2c" /><path d="M18 18l-12.100-7A14 14 0 0 0 17 32z" fill="#3ba24b" /><circle cx="18" cy="18" r="6.500" fill="#fff" /><circle cx="18" cy="18" r="5.200" fill="#3c78d0" /></D>, 'run'],
  ['Calc', '#38a42c', <Doc><path d="M11 15h15v12H11zM11 19h15M11 23h15M16 15v12M21 15v12" stroke="#2d9a24" strokeWidth="1.500" /><path d="M19 20h8v9h-8z" fill="#fff" stroke="#aaa" /><path d="M21.500 27v-3M24 27v-5" stroke="#e07a30" strokeWidth="2" /></Doc>],
  ['Impress', '#a85526', <Doc><rect x="11" y="16" width="14" height="12" rx="1.500" stroke="#b9572a" strokeWidth="1.800" /><path d="M14 19.500h8M14 22h8M14 24.500h8" stroke="#b9572a" strokeWidth="1.500" /></Doc>],
  ['Writer', '#2c76a8', <Doc><path d="M11 15h5M11 19h5M11 23h15M11 27h10" stroke="#1d6294" strokeWidth="2" /><path d="M18 14h8v6h-8z" fill="#2b7fbd" /></Doc>],
  ['Terminal', '#98979a', <D><path d="M4 8h28v22H4z" fill="#ddd" stroke="#777" /><path d="M6 10h24v18H6z" fill="#2c2c2c" /><path d="M9 13l4 2-4 2M14 19h5" stroke="#fff" strokeWidth="1.500" /></D>, 'run'],
  ['Qt Creator', '#7fb237', <D><path d="M5 4C3 6 3 10 3 30h20V4z" fill="#3f9a36" /><text x="6" y="22" fontFamily="Open Sans, sans-serif" fontWeight="700" fontSize="17" fill="#fff">Qt</text><path d="M18 31l2-5L30 16l3 3-10 10z" fill="#fbc62c" stroke="#eee" /></D>],
  ['Software Center', '#b3532f', <D><path d="M7 14h22l1 16-23 1z" fill="#e1541b" /><path d="M13 16c0-5 10-5 10 0" stroke="#f7a07c" strokeWidth="1.500" /><g fill="#c9c0bb"><circle cx="9" cy="9" r="1.700" /><circle cx="14" cy="6" r="2" /><circle cx="20" cy="8" r="2.200" /><circle cx="26" cy="9" r="1.800" /><circle cx="16" cy="11" r="1.300" /><circle cx="23" cy="5" r="1.300" /></g></D>],
  ['System Indicator', '#9a9d82', <D><rect x="4" y="6" width="28" height="23" rx="3" fill="#c9c9bd" stroke="#666" /><path d="M7 9h22v16H7z" fill="#283022" /><path d="M9 16h5M11.500 13.500v5M16 16h5M18.500 13.500v5M23 16h5M25.500 13.500v5M9 20.500h5M16 20.500h5M23 20.500h5" stroke="#dfe6d6" strokeWidth="1.300" strokeLinecap="butt" /></D>],
  ['Database', '#b06f2e', <D><path d="M18 9c-3-7 12-6 12 0M31 30c-4 2-11 1-11-2 2-4 7-3 11-1M19 18c-2-6 3-10 11-9" stroke="#7ea392" strokeWidth="4.500" /><path d="M7 30V18c0-9 6-12 11-11M7 24c8 4 18 1 18-7" stroke="#f58a20" strokeWidth="6" /></D>],
  ['System Monitor', '#3c83b5', <D><rect x="6" y="6" width="24" height="24" rx="3" fill="#7fc5ea" stroke="#4f9cc9" /><path d="M9 10h18v17H9z" fill="#2a7bae" stroke="#fff" strokeWidth="1.500" /><path d="M10.500 18l2 3 3-2 2 4 1.500-9 2.500 7 1-8 2 9h2" stroke="#fff" strokeWidth="1.500" /></D>],
  ['Text Editor', '#a39b98', <D><path d="M7 5h22v26H7z" fill="#fafafa" stroke="#bbb" /><path d="M12 9h13M12 12h14M12 15h12M12 18h13M12 21h8M12 24h9M12 27h6" stroke="#aaa" /><path d="M10 6v24" stroke="#e88" /><path d="M18 25L29 13" stroke="#333" strokeWidth="5" strokeLinecap="butt" /><path d="M29 13l3-3" stroke="#d9a" strokeWidth="5" strokeLinecap="butt" /><path d="M16 28l1-5 4 3.500z" fill="#e9d34c" /></D>, 'run'],
  ['QGIS', '#7cb035', <D><path d="M10 28L25 7" stroke="#1c7a22" strokeWidth="3.500" /><path d="M18 6l10-4-1 11z" fill="#1c7a22" /><path d="M22 10c-5-4-12 1-13 8-1 8 3 12 8 9 4-3 6-10 6-14" stroke="#eef29a" strokeWidth="4" /><path d="M20 18c-1 6-1 11 6 12l2-2M20 18l-5 3" stroke="#eef29a" strokeWidth="3" /></D>, 'active'],
  ['Document Viewer', '#b2393a', <D><rect x="5" y="4" width="26" height="27" rx="3" fill="#f8f8f8" stroke="#ddd" /><path d="M7 20c4 0 18-12 11-13-5-1-6 10-3 12 4 3 12 0 15-3" stroke="#e2494a" strokeWidth="2.200" /><path d="M9 24h18M9 27h16" stroke="#ddd" /></D>, 'run'],
  ['Paint', '#b88446', <D><path d="M2 10l12 4 15 8-2 10-22 2-3-4z" fill="#cabb3c" /><path d="M4 13h12v16H4z" fill="#cc1838" /><path d="M20 20L29 9" stroke="#c9c9c9" strokeWidth="8" /><path d="M29 8l4-4" stroke="#d98b35" strokeWidth="6" /><path d="M7 30c3 0 2-8 7-9s8 3 5 6-8 4-12 3z" fill="#1c1c1c" /></D>],
];

/* ---------- map drawing ---------- */
const orange = 'M338 566h33v17h19v18h41v18h18v44h23v17h18v18h23V715h41V698h282v35h18v5H431v-40h-19v-18h-22v-17h-41v-18h-11zM917 496h37v26h41v18h23v35h-23v-18h-41v-17h-37z';
const red = 'M338 601h11v18h-11zM371 601h19v18h22v26h19v18h18v17h23v35h41v23h-60v-23h-22v-35h-19v-17h-22v-18h-19z';
const blocks = [
  'M496 323l-8 21 8 3z',
  'M486 349l10 3v8l-4 1 1 6-3 7-12-4 1-9 3-8z',
  'M475 375l14 4 2-6 5 3v11l-23-7z',
  'M470 387l20 5-6 29-12-3-1 6 11 2-5 24-27-5 7-27 7-17z',
  'M496 393l-3 7 3 1zM496 405h-4l-2 9 1 1-3 9h-4l-4 26 16 3z',
  'M449 454l47 6v34l-52-14 3-20z',
  'M444 487l52 13v82l-26-36-24-34-5-12z',
  'M445 633l47-31 4 3v26l-38 25-3-2 3-3z',
  'M470 678l26-16v18l-17 10z',
  'M513 705h14l6 12-11 6zM542 713l6-8h18l-17 12z',
];
const yards = 'M463 430l2 1-1 7-2-1zM475 405l4 1-1 2-4-1zM461 465l8 1v2l-8-1zM471 472l7 0 0 1 8 0v2h-3l-1 4h-3l0-4-8-1zM451 497l2 5 5 4 8-1 19 5 2 3-5 5 14 5v2l-14-4-14 9 8-11-7-7-9 1-7-4zM480 524l8 13-7 6-5-3 4-7zM467 528l7-4 2 1-7 6zM490 544l6-5v10l-7 3-2-2 5-4zM471 545l7-3-6 5z';
const MapArt = () => (
  <svg width="100%" height="100%" viewBox="338 145 679 593" preserveAspectRatio="xMinYMin slice" role="img" aria-label="Flood map">
    <path d={orange} fill="#ff8000" shapeRendering="crispEdges" />
    <path d={red} fill="#f00" shapeRendering="crispEdges" />
    <path d="M490 662h6v36h-6zM513 700h51v15h-51z" fill="#ff6" />
    <g fill="#1dff7d" stroke="#27a85a" strokeWidth=".8">{blocks.map(d => <path key={d} d={d} />)}</g>
    <path d={yards} fill="#ffff66" stroke="#7fc45a" strokeWidth=".5" />
    <path d="M466 400l21 6M462 408l17 3M480 355l14 5M479 362l12 4M450 512l8 8 6-5M456 523l9-8M477 530l4 9M462 466l-2 18M489 475v18" stroke="#1fc968" fill="none" strokeWidth=".8" />
    <circle cx="491.500" cy="701" r="3" fill="#d5191c" />
  </svg>
);

/* ---------- small parts ---------- */
const DockButtons = () => (
  <>
    <DockBtn type="button" aria-label="Float"><svg width="12" height="12" viewBox="0 0 12 12" fill="none" stroke="#5a5a58"><rect x=".5" y=".5" width="11" height="11" rx="2" /><path d="M5.500 2.500h4v4h-4zM2.500 5.500h4v4h-4z" /></svg></DockBtn>
    <DockBtn type="button" aria-label="Close"><svg width="12" height="12" viewBox="0 0 12 12" fill="none" stroke="#5a5a58"><rect x=".5" y=".5" width="11" height="11" rx="2" /><path d="M3.500 3.500l5 5M8.500 3.500l-5 5" strokeWidth="2" /></svg></DockBtn>
  </>
);
const Tick = ({ label, s = 16, on }: { label?: string; s?: number; on?: boolean }) => (
  <CheckWrap $s={s}>
    <Box type="checkbox" aria-label={label} defaultChecked={on} />
    {on && <svg width="16" height="16" viewBox="0 0 16 16"><path d="M3.500 7.500L7 11.500 14 2.500" fill="none" stroke="#5f3325" strokeWidth="2.300" /></svg>}
  </CheckWrap>
);
const PolyIcon = ({ c }: { c: string }) => <svg width="16" height="16" viewBox="0 0 16 16"><path d="M.500 5c0-3 3-4.500 6-3 2 1 3 .500 5 0 3-.700 4.500 1 4 5-.400 4-2 6-5 3.800C8 9.500 6.500 9.500 4.500 11.500 1.500 13 .500 11 .500 5z" fill={c} stroke="#a3a09e" /></svg>;
const RasterIcon = () => <svg width="16" height="16" viewBox="0 0 16 16"><path d="M0 0h16v16H0z" fill="#c9c9c9" /><path d="M0 0h6v6H0zM11 0h5v6h-5zM6 6h5v5H6zM0 11h6v5H0z" fill="#999" /><path d="M11 11h5v5h-5zM6 0h5v6H6z" fill="#ddd" /></svg>;
const LayerItem = ({ name, open, sel, icon }: { name: string; open?: boolean; sel?: boolean; icon: React.ReactNode }) => (
  <LayerRow $sel={sel}>
    <Expander type="button" aria-label={`Expand ${name}`}><svg width="9" height="9" viewBox="0 0 9 9"><path d={open ? 'M1 1h7L4.500 8z' : 'M1 1v7l7-3.500z'} fill="#5d5c5a" /></svg></Expander>
    <Tick label={name} on />
    {icon}<span>{name}</span>
  </LayerRow>
);
const Choice = ({ id, value }: { id: string; value: string }) => (
  <SelectWrap><Select id={id} defaultValue={value}><option>{value}</option></Select><UpDown /></SelectWrap>
);

export default function App() {
  return (
    <Desktop>
      <Global />
      <TopBar>
        <AppName>QGIS Desktop</AppName>
        <Indicator $gap={0}><svg width="18" height="13" viewBox="0 0 18 13"><rect width="18" height="13" rx="1" fill="#dfdbd2" /><path d="M1.500 1.500L9 8l7.500-6.500M1.500 11.500l5-5M16.500 11.500l-5-5" stroke="#44433e" fill="none" /></svg></Indicator>
        <Indicator $gap={14}><svg width="21" height="12" viewBox="0 0 21 12"><rect x=".75" y=".75" width="17.500" height="10.500" rx="2" fill="none" stroke="#a9a69e" strokeWidth="1.500" /><rect x="3" y="3" width="5" height="6" fill="#dfdbd2" /><rect x="19" y="3.500" width="2" height="5" fill="#a9a69e" /></svg>1:15</Indicator>
        <Indicator $gap={11}><svg width="9" height="15" viewBox="0 0 9 15"><path d="M1 4l7 7-3.500 3V1L8 4l-7 7" stroke="#dfdbd2" fill="none" strokeWidth="1.200" /></svg></Indicator>
        <Indicator $gap={14}><svg width="17" height="16" viewBox="0 0 17 16"><path d="M5 0l4.500 5H7v7.500H3.500V5H0zM12 16l-4.500-5H10V3.500h3.500V11H17z" fill="#dfdbd2" /></svg></Indicator>
        <Indicator $gap={14}><svg width="17" height="12" viewBox="0 0 17 12"><path d="M0 3.500h3L7.500 0v12L3 8.500H0z" fill="#85827a" /><path d="M11 3.500l5 5M16 3.500l-5 5" stroke="#85827a" strokeWidth="1.500" /></svg></Indicator>
        <Indicator $gap={18}>4:25 PM</Indicator>
        <Indicator $gap={13}><svg width="13" height="14" viewBox="0 0 13 14"><path d="M6.500 0C9 0 10 2 9.500 4.500 9 7 8 7.500 8 9c0 1 5 1.500 5 5H0c0-3.500 5-4 5-5 0-1.500-1-2-1.500-4.500C3 2 4 0 6.500 0z" fill="#dfdbd2" /></svg></Indicator>
        <Indicator $gap={4}>Dianne Bencito</Indicator>
        <Indicator $gap={13}><svg width="17" height="17" viewBox="0 0 17 17" fill="none" stroke="#dfdbd2"><circle cx="8.500" cy="8.500" r="5.500" strokeWidth="1.500" /><circle cx="8.500" cy="8.500" r="7.200" strokeWidth="2" strokeDasharray="2.500 3.150" /><path d="M8.500 0v9" stroke="#44433e" strokeWidth="4" /><path d="M8.500 1.500v6.500" strokeWidth="1.700" /></svg></Indicator>
      </TopBar>
      <Below>
        <Launcher aria-label="Launcher">
          {apps.map(([name, bg, icon, state]) => (
            <LaunchRow key={name}>
              <svg width="5" height="8" viewBox="0 0 5 8">{state && <path d="M0 1l4 3-4 3" fill={state === 'active' ? '#e8e4df' : 'none'} stroke="#d9cfc9" strokeWidth="1.200" />}</svg>
              <Tile type="button" aria-label={name} $bg={bg}>{icon}</Tile>
              <svg width="6" height="8" viewBox="0 0 6 8">{state === 'active' && <path d="M6 0L1 4l5 4z" fill="#e8e4df" />}</svg>
            </LaunchRow>
          ))}
          <LaunchRow $folded>
            <span />
            <Tile type="button" aria-label="Workspace Switcher" $bg="#6b2210" $short><D><path d="M7 10h22v15H7z" stroke="#fff" strokeWidth="1.500" /><path d="M18 10v15M7 18h22" stroke="#bba" /><path d="M9 12h5v3H9z" stroke="#fff" /></D></Tile>
          </LaunchRow>
          <LaunchRow $folded>
            <span />
            <svg width="38" height="18" viewBox="0 0 38 18"><path d="M3 0h32l3 17H0z" fill="#823a26" stroke="#a5634f" /><path d="M9 1h20l-1 3H10z" fill="#ddd" /><path d="M11 5h16l-1 9H12z" fill="#c9c5c2" /><path d="M12 8l4-2 3 3 4-3 3 3M12 11l4-1 4 2 5-2" stroke="#fff" fill="none" /></svg>
          </LaunchRow>
        </Launcher>
        <Main>
          <ToolRow>
            <Bar><Handle /><Tools items={fileTools} /></Bar>
            <Bar><Handle /><Tools items={navTools} /></Bar>
            <Bar><Handle /><Tools items={attrTools} /></Bar>
            <Bar><Handle /><Tools items={helpTools} /></Bar>
          </ToolRow>
          <ToolRow>
            <Bar>
              <Handle />
              <Split>
                <Bare type="button" aria-label="Current edits"><I><Pencil c="#bdbdbd" x={-3} /><Pencil c="#bdbdbd" x={3} /></I></Bare>
                <Arrow type="button" aria-label="Current edits menu" $w={12}><Tri c="#aaa" /></Arrow>
              </Split>
              <Tools items={editTools} />
            </Bar>
            <Bar><Handle /><Tools items={labelTools} /></Bar>
            <Bar><Handle /></Bar>
            <Bar><Handle /><Tools items={pluginTools} /></Bar>
          </ToolRow>
          <ToolRow>
            <Bar><Handle /><Tools items={advTools} /></Bar>
            <Bar $end><Handle /><Tools items={safeTools} /><More type="button">»</More></Bar>
          </ToolRow>
          <Middle>
            <SideTools>
              <SideHandle />
              <Tools items={sideTools} />
              <SideSplit>
                <ToolButton type="button" aria-label="New layer"><I><Vee /><Star /></I></ToolButton>
                <Arrow type="button" aria-label="New layer menu" $w={20}><Tri /></Arrow>
              </SideSplit>
              <ToolButton type="button" aria-label="Remove layer"><I><path d="M1.500 2h19v19h-19z" stroke="#888" /><rect x="15" y="15" width="9" height="8.500" rx="1.500" fill="#ee4242" /><path d="M17 19.250h5" stroke="#fff" strokeWidth="2.200" /></I></ToolButton>
              <SideHandle />
            </SideTools>
            <LayersDock>
              <LayersHead><span>Layers</span><DockButtons /></LayersHead>
              <Tree>
                <LayerItem name="Estimated buildin..." open sel icon={<PolyIcon c="#efc8bd" />} />
                <ClassRow><Swatch $c="#1dff7d" $b="#3fe68a" />Not Inundated</ClassRow>
                <ClassRow><Swatch $c="#f61b1b" $b="#e04444" />Inundated</ClassRow>
                <LayerItem name="buildingsINquiapo" open icon={<PolyIcon c="#e4e4e4" />} />
                <ClassRow><Swatch $c="#9f7597" $b="#3b2a38" /></ClassRow>
                <LayerItem name="flood_5yr" icon={<RasterIcon />} />
                <LayerItem name="popden_2007" icon={<RasterIcon />} />
              </Tree>
              <Tabs><Tab type="button" $on>Layers</Tab><Tab type="button">Browser</Tab></Tabs>
            </LayersDock>
            <Splitter $w={6}><Handle /></Splitter>
            <MapView><MapArt /></MapView>
            <Splitter $w={8}><Handle /></Splitter>
            <SafeDock>
              <SafeHead><span>InaSAFE 2.0.0-3 dev</span><DockButtons /></SafeHead>
              <SafeBody>
                <Push type="button" $wide>Show question form</Push>
                <WebGrid>
                  <Web>
                    <Brand>
                      <svg width="36" height="62" viewBox="0 0 36 62"><path d="M18 1L2 31c-2 5 0 9 2 13v12l14 2 14-2V44c2-4 4-8 2-13z" fill="#fbb040" stroke="#f15a29" /><path d="M18 1L9 17l9-9 9 9z" fill="#f15a29" opacity=".7" /><path d="M18 1v61" stroke="#f15a29" strokeWidth="1.500" /></svg>
                      Ina<b>SAFE</b>
                    </Brand>
                    <Results><svg width="12" height="12" viewBox="0 0 12 12"><circle cx="6" cy="6" r="6" fill="#fff" /><path d="M5 2h2v2H5zM4.500 5H7v3.500h1V10H4V8.500h1v-2h-.500z" fill="#0070cc" /></svg>Analysis Results</Results>
                    <Table>
                      <colgroup><TypeCol /><CountCol /><col /></colgroup>
                      <tbody>
                        <tr><td colSpan={3}>In the event of <i>flood_5yr</i> how many<br /><i>buildingsinquiapo</i> might <i>be flooded</i></td></tr>
                        <tr><th>Building<br />type</th><th>Number<br />flooded</th><th>Total</th></tr>
                        <tr><td>All</td><td>80</td><td>491</td></tr>
                        <tr><th colSpan={3}>Breakdown by building type</th></tr>
                        <tr><td>Building</td><td>9</td><td>63</td></tr>
                        <tr><td>Commercial</td><td>5</td><td>47</td></tr>
                        <tr><td>Multipurpose</td><td>1</td><td>25</td></tr>
                      </tbody>
                    </Table>
                  </Web>
                  <VScroll>
                    <ScrollEnd type="button" aria-label="Scroll up"><svg width="5" height="4" viewBox="0 0 5 4"><path d="M0 3.500h5L2.500 0z" fill="#999" /></svg></ScrollEnd>
                    <Thumb $v><Handle /></Thumb><Gap />
                    <ScrollEnd type="button" aria-label="Scroll down"><svg width="6" height="4" viewBox="0 0 6 4"><path d="M0 0h6L3 4z" fill="#555" /></svg></ScrollEnd>
                  </VScroll>
                  <HScroll>
                    <ScrollEnd type="button" aria-label="Scroll left"><svg width="4" height="5" viewBox="0 0 4 5"><path d="M4 0v5L0 2.500z" fill="#999" /></svg></ScrollEnd>
                    <Thumb><SideHandle /></Thumb><Gap />
                    <ScrollEnd type="button" aria-label="Scroll right"><svg width="4" height="6" viewBox="0 0 4 6"><path d="M0 0v6l4-3z" fill="#555" /></svg></ScrollEnd>
                  </HScroll>
                </WebGrid>
                <Logos>
                  <svg width="51" height="65" viewBox="0 0 51 65" role="img" aria-label="BNPB">
                    <defs><path id="arcTop" d="M5 26a20.500 20.500 0 0 1 41 0" /><path id="arcLow" d="M2.500 24a23 23 0 0 0 46 0" /></defs>
                    <circle cx="25.500" cy="26" r="25" fill="#fff" stroke="#888" strokeWidth=".8" />
                    <path d="M.800 24a24.700 24.700 0 0 1 49.400 0l-6.200 0a18.500 18.500 0 0 0-37 0z" fill="#e30b1c" />
                    <circle cx="25.500" cy="26" r="18.500" fill="#ef8200" />
                    <path d="M25.500 7L41 35H10z" fill="#0b4da2" />
                    <g fontFamily="Liberation Sans, sans-serif" fontWeight="700" fontSize="5">
                      <text fill="#fff"><textPath href="#arcTop" startOffset="9">BADAN NASIONAL</textPath></text>
                      <text fill="#e30b1c" fontSize="4"><textPath href="#arcLow" startOffset="7">PENANGGULANGAN BENCANA</textPath></text>
                    </g>
                    <g fontFamily="Liberation Sans, sans-serif" fontWeight="700" fontSize="13" fill="#0b4da2" stroke="#0b4da2" strokeWidth=".6"><text x="0" y="63">B</text><text x="14" y="63">N</text><text x="28" y="63">P</text><text x="41" y="63">B</text></g>
                  </svg>
                  <Support>
                    <span>Supported by:</span>
                    <LogoRow>
                      <svg width="98" height="31" viewBox="0 0 98 31" role="img" aria-label="Australian Aid"><g fontFamily="Liberation Sans, sans-serif" fontWeight="700" fontSize="13" fill="#1d2a5b" stroke="#1d2a5b" strokeWidth=".4"><text x="0" y="11">Australian</text><text x="0" y="24">Aid</text></g><path d="M25 20c4 4 8 1 12-3 3-3 7-4 10-1 2 0 3-3 5-3l4 2-3 2-3 1 1 3-3-1-5 3 1 5 3 3-5-3-1-4c-4-1-9 0-16-4z" fill="#e4002b" /></svg>
                      <svg width="29" height="31" viewBox="0 0 29 31" role="img" aria-label="The World Bank"><path d="M4 4h20v19H4z" fill="#222" /><g fill="none" stroke="#fff"><circle cx="14" cy="13.500" r="8.500" /><ellipse cx="14" cy="13.500" rx="4" ry="8.500" /><path d="M14 5v17M5.500 13.500h17M7 9h14M7 18h14" /></g><text x="1" y="28" fontFamily="Liberation Sans, sans-serif" fontWeight="700" fontSize="3" fill="#333">THE WORLD BANK</text></svg>
                      <svg width="86" height="31" viewBox="0 0 86 31" role="img" aria-label="GFDRR"><circle cx="9.500" cy="15" r="8.500" fill="#d9eebf" stroke="#43a9d8" strokeWidth="1.500" /><g fill="none" stroke="#6fb244"><circle cx="9.500" cy="15" r="6" /><path d="M5 11l4 2 5-3M5 18l4-5 4 6M4 15h11" /></g><path d="M20.500 6v18" stroke="#43a9d8" strokeWidth="1.300" /><text x="22" y="19" fontFamily="Open Sans, sans-serif" fontWeight="700" fontSize="18" fill="#333">GFDRR</text><text x="23" y="24" fontFamily="Liberation Sans, sans-serif" fontWeight="700" fontSize="2" fill="#444">Global Facility for Disaster Reduction and Recovery</text></svg>
                    </LogoRow>
                  </Support>
                </Logos>
                <Buttons><Push type="button">Help</Push><Push type="button">Print...</Push><Push type="button">Run</Push></Buttons>
              </SafeBody>
            </SafeDock>
          </Middle>
          <Status>
            <Message>Toggles the editing state of the current layer</Message>
            <MiniBtn type="button" aria-label="Toggle extents" $gap={10}><svg width="16" height="16" viewBox="0 0 16 16" fill="none" stroke="#222" strokeWidth="1.300"><ellipse cx="5" cy="5" rx="2.500" ry="4" transform="rotate(-30 5 5)" /><ellipse cx="9" cy="4.500" rx="2" ry="3.500" /><circle cx="9" cy="10.500" r="4" /><circle cx="9" cy="11" r="1" /><path d="M12 5l3-3" /></svg></MiniBtn>
            <StatusLabel $w={89} htmlFor="coord">Coordinate:</StatusLabel>
            <Coord id="coord" defaultValue="120.98092,14.59971" />
            <StatusLabel $w={48} htmlFor="scale">Scale</StatusLabel>
            <Combo><input id="scale" defaultValue="1:4829" /><button type="button" aria-label="Scales"><Tri /></button></Combo>
            <MiniBtn type="button" aria-label="Stop rendering" $gap={9}><svg width="16" height="16" viewBox="0 0 16 16" fill="none"><path d="M14 3L8 11M7 11c-2 0-1 3-4 4 3 1 6 0 6-2z" stroke="#888" strokeWidth="2" fill="#777" /><circle cx="6" cy="6" r="4.500" stroke="#d32f2f" strokeWidth="1.500" /><path d="M3 3l6 6" stroke="#d32f2f" strokeWidth="1.500" /></svg></MiniBtn>
            <RenderBox><Tick on />Render</RenderBox>
            <StatusLabel $w={82} $dim>EPSG:4326</StatusLabel>
            <MiniBtn type="button" aria-label="CRS status" $gap={8}><svg width="16" height="16" viewBox="0 0 16 16" fill="#999" stroke="#666"><circle cx="8" cy="8" r="6" /><ellipse cx="8" cy="8" rx="3" ry="6" fill="none" /><path d="M2 8h12M8 2v12" /></svg></MiniBtn>
            <MiniBtn type="button" aria-label="Messages" $gap={0}><svg width="16" height="16" viewBox="0 0 16 16"><path d="M8 2L1.500 14h13z" fill="#f3f0a6" stroke="#8b8a70" /><path d="M8 6v4M8 11.500v1.500" stroke="#222" strokeWidth="1.600" /></svg></MiniBtn>
          </Status>
        </Main>
      </Below>

      <Dialog aria-label="Save vector layer as..." onSubmit={e => e.preventDefault()}>
        <TitleBar>
          <WinBtn type="button" aria-label="Close" $close><svg width="8" height="8" viewBox="0 0 8 8"><path d="M1.500 1.500l5 5M6.500 1.500l-5 5" stroke="#5c1c08" strokeWidth="1.300" /></svg></WinBtn>
          <WinBtn type="button" aria-label="Maximize"><svg width="8" height="8" viewBox="0 0 8 8"><path d="M1 1h6v6H1z" fill="none" stroke="#2f2e2b" strokeWidth="1.200" /></svg></WinBtn>
          <strong>Save vector layer as...</strong>
        </TitleBar>
        <Form>
          <Label htmlFor="format">Format</Label><Choice id="format" value="ESRI Shapefile" />
          <Label htmlFor="saveas">Save as</Label><Pair><Field id="saveas" /><Push type="button" $hot>Browse</Push></Pair>
          <Label htmlFor="encoding">Encoding</Label><Choice id="encoding" value="System" />
          <Label htmlFor="crs" $tall>CRS</Label><Choice id="crs" value="Layer CRS" />
          <Pair><Field aria-label="CRS name" defaultValue="WGS 84" disabled /><Push type="button">Browse</Push></Pair>
          <Label htmlFor="symbology">Symbology export</Label><Choice id="symbology" value="No symbology" />
          <Label htmlFor="symscale" $off>Scale</Label>
          <Spin><input id="symscale" defaultValue="1:50000" disabled /><span><UpDown c="#b5b3b1" /></span></Spin>
        </Form>
        <Group>
          <legend>OGR creation options</legend>
          <Options>
            <Label htmlFor="dsopts">Data source</Label><OptionArea id="dsopts" />
            <Label htmlFor="lyopts">Layer</Label><OptionArea id="lyopts" />
          </Options>
        </Group>
        <Checks>
          <Check><Tick s={14} />Skip attribute creation</Check>
          <Check><Tick s={14} />Add saved file to map</Check>
        </Checks>
        <Actions>
          <Push type="button">Help</Push><Push type="button"><u>C</u>ancel</Push><Push type="submit"><u>O</u>K</Push>
        </Actions>
      </Dialog>
      <Pointer><svg width="13" height="20" viewBox="0 0 13 20"><path d="M1 1v15.500l3.500-3 2.500 5.500 2.500-1-2.300-5.500H12z" fill="#fff" stroke="#000" strokeWidth="1.300" /></svg></Pointer>
    </Desktop>
  );
}
